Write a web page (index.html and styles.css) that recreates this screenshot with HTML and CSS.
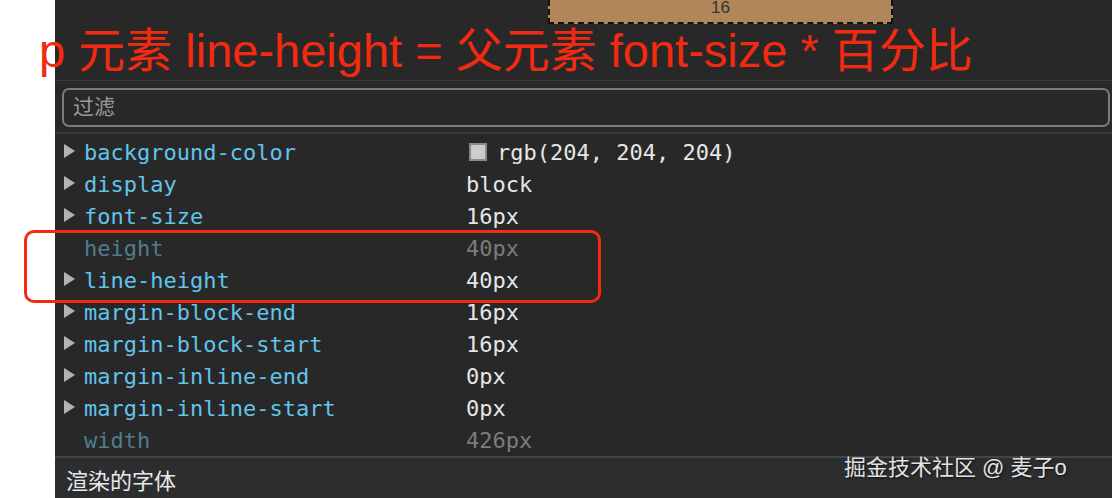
FILE: index.html
```html
<!DOCTYPE html>
<html lang="zh-CN">
<head>
    <meta charset="UTF-8">
    <meta name="viewport" content="width=device-width, initial-scale=1.0">
    <title>计算样式</title>
    <link rel="stylesheet" href="styles.css">
</head>
<body>
    <div class="page">
        <div class="gutter"></div>
        <div class="panel">
            <div class="preview">
                <div class="box-model">16</div>
            </div>

            <div class="filter-bar">
                <div class="filter">过滤</div>
            </div>

            <ul class="props">
                <li class="prop">
                    <span class="arrow"></span>
                    <span class="name">background-color</span>
                    <span class="value"><i class="swatch"></i>rgb(204, 204, 204)</span>
                </li>
                <li class="prop">
                    <span class="arrow"></span>
                    <span class="name">display</span>
                    <span class="value">block</span>
                </li>
                <li class="prop">
                    <span class="arrow"></span>
                    <span class="name">font-size</span>
                    <span class="value">16px</span>
                </li>
                <li class="prop dim">
                    <span class="arrow"></span>
                    <span class="name">height</span>
                    <span class="value">40px</span>
                </li>
                <li class="prop">
                    <span class="arrow"></span>
                    <span class="name">line-height</span>
                    <span class="value">40px</span>
                </li>
                <li class="prop">
                    <span class="arrow"></span>
                    <span class="name">margin-block-end</span>
                    <span class="value">16px</span>
                </li>
                <li class="prop">
                    <span class="arrow"></span>
                    <span class="name">margin-block-start</span>
                    <span class="value">16px</span>
                </li>
                <li class="prop">
                    <span class="arrow"></span>
                    <span class="name">margin-inline-end</span>
                    <span class="value">0px</span>
                </li>
                <li class="prop">
                    <span class="arrow"></span>
                    <span class="name">margin-inline-start</span>
                    <span class="value">0px</span>
                </li>
                <li class="prop dim">
                    <span class="arrow"></span>
                    <span class="name">width</span>
                    <span class="value">426px</span>
                </li>
            </ul>

            <div class="fonts">渲染的字体</div>
        </div>
    </div>

    <!-- annotations drawn on top of the screenshot -->
    <div class="note">p 元素 line-height = 父元素 font-size * 百分比</div>
    <div class="mark"></div>
    <div class="watermark">掘金技术社区 @ 麦子o</div>
</body>
</html>
```

FILE: styles.css
```css
* {
    box-sizing: border-box;
}

body {
    margin: 0;
    background-color: white;
    font-family: "Liberation Sans", "Noto Sans CJK SC", sans-serif;
    overflow: hidden;
}

.page {
    display: flex;
    height: 498px;
}

.gutter {
    width: 55px;
    background-color: white;
}

.panel {
    flex: 1;
    display: flex;
    flex-direction: column;
    background-color: #282828;
}

.preview {
    height: 81px;
    padding-left: 493px;
    border-bottom: 1px solid #3a3a3a;
}

.box-model {
    width: 345px;
    height: 24px;
    background-color: #b0865a;
    border: 2px dashed #111;
    border-top: none;
    color: #333;
    font-size: 17px;
    text-align: center;
    line-height: 16px;
}

.filter-bar {
    height: 53px;
    padding: 7px 2px 0 7px;
    border-bottom: 2px solid #3a3a3a;
}

.filter {
    height: 39px;
    border: 2px solid #7a7a7a;
    border-radius: 7px;
    padding-left: 9px;
    color: #9a9a9a;
    font-size: 21px;
    line-height: 34px;
}

.props {
    list-style: none;
    margin: 0;
    padding: 2px 0 0 0;
    flex: 1;
    font-family: "DejaVu Sans Mono", monospace;
    font-size: 22px;
}

.prop {
    display: flex;
    align-items: center;
    height: 32px;
}

.arrow {
    width: 11px;
    height: 14px;
    margin: 0 9px 2px 9px;
}

.prop .arrow {
    border-left: 11px solid #b4b4b4;
    border-top: 7px solid transparent;
    border-bottom: 7px solid transparent;
}

.dim .arrow {
    border-left-color: transparent;
}

.name {
    width: 382px;
    color: #62c4ea;
}

.value {
    display: flex;
    align-items: center;
    color: #e6e6e6;
}

.swatch {
    width: 18px;
    height: 18px;
    margin: 0 10px 0 3px;
    background-color: #cccccc;
    border: 2px solid #8a8a8a;
}

.dim .name {
    color: #4f7d8c;
}

.dim .value {
    color: #7c7c7c;
}

.fonts {
    height: 42px;
    border-top: 2px solid #444;
    background-color: #2c2d2f;
    padding: 4px 0 0 11px;
    color: #e8e8e8;
    font-size: 22px;
    line-height: 40px;
}

.note {
    position: absolute;
    left: 39px;
    top: 12px;
    color: #f22a10;
    font-size: 47px;
    white-space: nowrap;
}

.mark {
    position: absolute;
    left: 24px;
    top: 230px;
    width: 577px;
    height: 73px;
    border: 3px solid #f22a10;
    border-radius: 10px;
}

.watermark {
    position: absolute;
    left: 844px;
    top: 449px;
    color: #e2e2e2;
    font-size: 22px;
    text-shadow: 1px 1px 2px #111;
    white-space: nowrap;
}
```
